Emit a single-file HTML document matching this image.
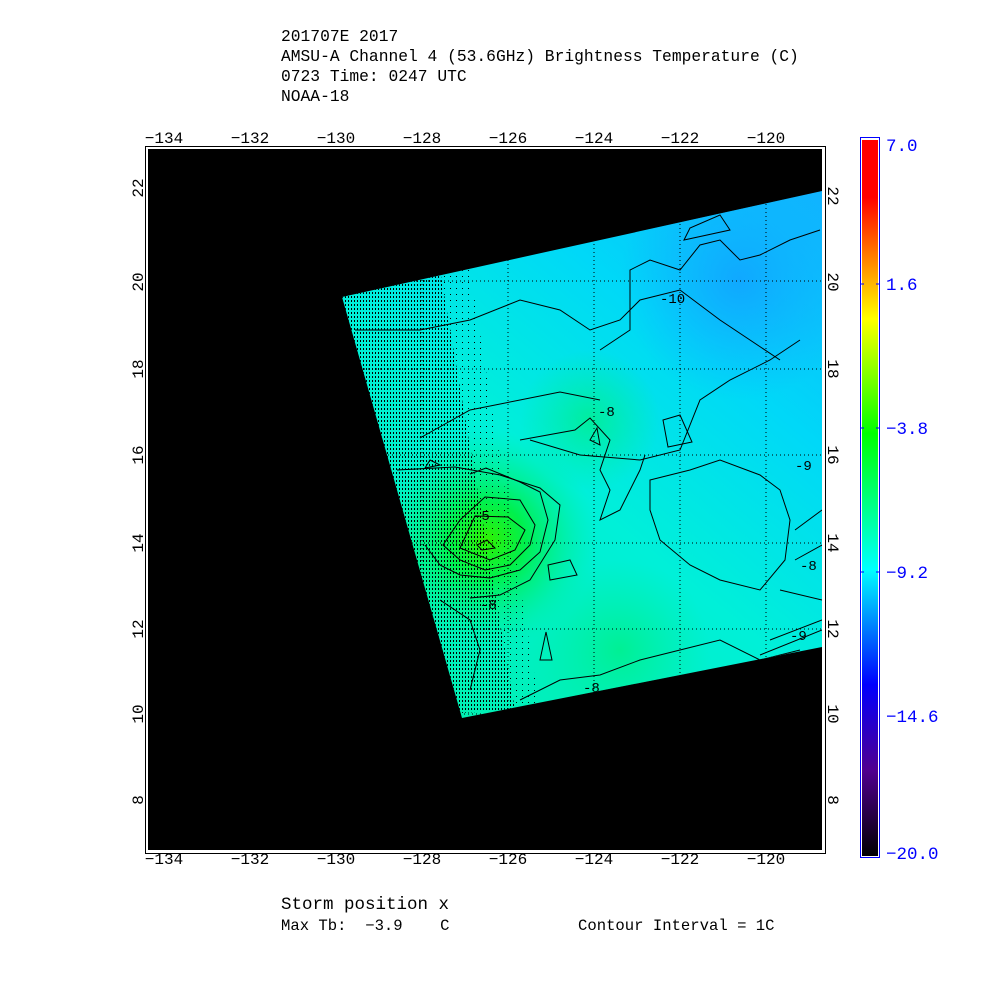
<!DOCTYPE html>
<html><head><style>
body{margin:0;background:#fff;width:1000px;height:1000px;overflow:hidden}
text{font-family:"Liberation Mono","DejaVu Sans Mono",monospace}
</style></head><body>
<svg width="1000" height="1000" viewBox="0 0 1000 1000" xmlns="http://www.w3.org/2000/svg">
<defs>
<linearGradient id="cb" x1="0" y1="0" x2="0" y2="1">
<stop offset="0" stop-color="#ff0000"/><stop offset="0.08" stop-color="#ff0000"/>
<stop offset="0.16" stop-color="#ff7a00"/><stop offset="0.25" stop-color="#ffff00"/>
<stop offset="0.41" stop-color="#00ff00"/><stop offset="0.6" stop-color="#00ffff"/>
<stop offset="0.76" stop-color="#0000ff"/><stop offset="0.88" stop-color="#500090"/>
<stop offset="1" stop-color="#000000"/></linearGradient>
<linearGradient id="base" x1="822" y1="200" x2="420" y2="700" gradientUnits="userSpaceOnUse">
<stop offset="0" stop-color="#10b4ff"/><stop offset="0.3" stop-color="#00d8f8"/>
<stop offset="0.6" stop-color="#00f0d8"/><stop offset="1" stop-color="#00f0b0"/></linearGradient>
<radialGradient id="g1" cx="487" cy="540" r="110" gradientUnits="userSpaceOnUse">
<stop offset="0" stop-color="#30f000"/><stop offset="0.35" stop-color="#00f040" stop-opacity="0.9"/>
<stop offset="1" stop-color="#00f0a0" stop-opacity="0"/></radialGradient>
<radialGradient id="g2" cx="590" cy="420" r="70" gradientUnits="userSpaceOnUse">
<stop offset="0" stop-color="#00f080" stop-opacity="0.7"/><stop offset="1" stop-color="#00f090" stop-opacity="0"/></radialGradient>
<radialGradient id="g3" cx="620" cy="650" r="90" gradientUnits="userSpaceOnUse">
<stop offset="0" stop-color="#00f070" stop-opacity="0.6"/><stop offset="1" stop-color="#00f090" stop-opacity="0"/></radialGradient>
<radialGradient id="g4" cx="740" cy="280" r="120" gradientUnits="userSpaceOnUse">
<stop offset="0" stop-color="#10a8ff"/><stop offset="1" stop-color="#10b0ff" stop-opacity="0"/></radialGradient>
<pattern id="dots" width="3" height="4" patternUnits="userSpaceOnUse"><rect width="1" height="2" fill="#000"/></pattern>
<pattern id="dots2" width="6" height="6" patternUnits="userSpaceOnUse"><rect width="1" height="1" fill="#000"/></pattern>
<clipPath id="sw"><polygon points="342,297 822,191 822,647 462,718"/></clipPath>
</defs>
<g font-size="16.3" fill="#000">
<text x="281" y="41">201707E 2017</text>
<text x="281" y="61">AMSU-A Channel 4 (53.6GHz) Brightness Temperature (C)</text>
<text x="281" y="81">0723 Time: 0247 UTC</text>
<text x="281" y="101">NOAA-18</text>
</g>
<rect x="145.5" y="146.5" width="680" height="707" fill="#fff" stroke="#000"/>
<rect x="148" y="149" width="674" height="701" fill="#000"/>
<g clip-path="url(#sw)">
<rect x="330" y="180" width="500" height="550" fill="url(#base)"/>
<rect x="330" y="180" width="500" height="550" fill="url(#g4)"/>
<rect x="330" y="180" width="500" height="550" fill="url(#g2)"/>
<rect x="330" y="180" width="500" height="550" fill="url(#g3)"/>
<rect x="330" y="180" width="500" height="550" fill="url(#g1)"/>
<polygon points="330,280 440,270 515,710 330,720" fill="url(#dots)"/>
<polygon points="440,270 470,270 540,710 515,710" fill="url(#dots2)"/>
<g stroke="#000" stroke-width="1" stroke-dasharray="1,3">
<line x1="336" y1="281" x2="822" y2="281"/><line x1="336" y1="369" x2="822" y2="369"/>
<line x1="336" y1="455" x2="822" y2="455"/><line x1="336" y1="543" x2="822" y2="543"/>
<line x1="336" y1="629" x2="822" y2="629"/><line x1="336" y1="714" x2="822" y2="714"/>
<line x1="422" y1="180" x2="422" y2="730"/><line x1="508" y1="180" x2="508" y2="730"/>
<line x1="594" y1="180" x2="594" y2="730"/><line x1="680" y1="180" x2="680" y2="730"/>
<line x1="766" y1="180" x2="766" y2="730"/>
</g>
<g fill="none" stroke="#000" stroke-width="1">
<path d="M470,474 L486,468 L520,482 L540,492 L548,520 L540,552 L520,570 L490,578 L460,575 L440,565 L425,545"/>
<path d="M485,497 L520,500 L535,525 L530,545 L510,565 L485,570 L460,560 L443,545 L460,520 Z"/>
<path d="M475,516 L508,517 L525,530 L515,550 L490,560 L460,548 Z"/>
<path d="M477,545 L487,540 L495,548 L482,550 Z"/>
<path d="M397,470 L455,467 L500,475 L540,488 L560,505 L555,540 L530,580 L500,595 L470,598"/>
<path d="M520,440 L575,430 L590,418 L610,440 L600,470 L610,490 L600,520 L620,510 L640,470 L645,455"/>
<path d="M420,438 L470,410 L520,400 L560,392 L600,400"/>
<path d="M530,440 L580,455 L640,460 L680,450 L700,400 L730,380 L770,360 L800,340"/>
<path d="M355,330 L420,330 L470,320 L520,300 L560,310 L590,330 L620,320 L640,300 L680,290 L720,320 L780,360"/>
<path d="M600,350 L630,330 L630,270 L650,260 L680,270 L700,245 L720,240 L740,260 L760,255 L790,240 L820,230"/>
<path d="M684,240 L690,228 L720,215 L730,230 Z"/>
<path d="M650,480 L690,470 L720,460 L760,475 L780,490 L790,520 L785,560 L760,590 L720,580 L690,565 L660,540 L650,510 Z"/>
<path d="M548,565 L570,560 L577,575 L550,580 Z"/>
<path d="M540,660 L546,632 L552,660 Z"/>
<path d="M520,700 L560,680 L600,675 L640,660 L680,650 L720,640 L760,660 L800,650"/>
<path d="M663,420 L680,415 L692,442 L668,447 Z"/>
<path d="M590,440 L597,428 L600,445 Z"/>
<path d="M795,530 L822,510 M795,560 L822,545 M780,590 L822,600 M770,640 L822,620 M760,655 L822,630"/>
<path d="M430,460 L440,465 L425,468 Z"/>
<path d="M440,600 L470,620 L480,650 L470,690"/>
</g>
<g font-size="14" fill="#000">
<text x="598" y="416">-8</text><text x="660" y="303">-10</text><text x="480" y="609">-8</text>
<text x="795" y="470">-9</text><text x="800" y="570">-8</text><text x="790" y="640">-9</text>
<text x="583" y="692">-8</text><text x="473" y="520">-5</text>
</g>
</g>
<g font-size="16" fill="#000" text-anchor="middle">
<text x="164" y="143">−134</text><text x="250" y="143">−132</text><text x="336" y="143">−130</text>
<text x="422" y="143">−128</text><text x="508" y="143">−126</text><text x="594" y="143">−124</text>
<text x="680" y="143">−122</text><text x="766" y="143">−120</text>
<text x="164" y="864">−134</text><text x="250" y="864">−132</text><text x="336" y="864">−130</text>
<text x="422" y="864">−128</text><text x="508" y="864">−126</text><text x="594" y="864">−124</text>
<text x="680" y="864">−122</text><text x="766" y="864">−120</text>
</g>
<g font-size="16" fill="#000" text-anchor="middle">
<text transform="translate(143,188) rotate(-90)">22</text>
<text transform="translate(143,282) rotate(-90)">20</text>
<text transform="translate(143,369) rotate(-90)">18</text>
<text transform="translate(143,455) rotate(-90)">16</text>
<text transform="translate(143,543) rotate(-90)">14</text>
<text transform="translate(143,629) rotate(-90)">12</text>
<text transform="translate(143,714) rotate(-90)">10</text>
<text transform="translate(143,800) rotate(-90)">8</text>
<text transform="translate(828,196) rotate(90)">22</text>
<text transform="translate(828,282) rotate(90)">20</text>
<text transform="translate(828,369) rotate(90)">18</text>
<text transform="translate(828,455) rotate(90)">16</text>
<text transform="translate(828,543) rotate(90)">14</text>
<text transform="translate(828,629) rotate(90)">12</text>
<text transform="translate(828,714) rotate(90)">10</text>
<text transform="translate(828,800) rotate(90)">8</text>
</g>
<rect x="860.5" y="137.5" width="19" height="720" fill="#fff" stroke="#0000ff"/>
<rect x="862" y="140" width="16" height="716" fill="url(#cb)"/>
<g stroke="#0000ff"><line x1="860" y1="284" x2="864" y2="284"/><line x1="876" y1="284" x2="880" y2="284"/>
<line x1="860" y1="428" x2="864" y2="428"/><line x1="876" y1="428" x2="880" y2="428"/>
<line x1="860" y1="572" x2="864" y2="572"/><line x1="876" y1="572" x2="880" y2="572"/></g>
<g font-size="17.5" fill="#0000ff">
<text x="886" y="151">7.0</text><text x="886" y="290">1.6</text><text x="886" y="434">−3.8</text>
<text x="886" y="578">−9.2</text><text x="886" y="722">−14.6</text><text x="886" y="859">−20.0</text>
</g>
<g font-size="17.5" fill="#000">
<text x="281" y="909">Storm position x</text>
<text x="281" y="930" font-size="15.6" xml:space="preserve">Max Tb:  −3.9    C</text>
<text x="578" y="930" font-size="15.6">Contour Interval = 1C</text>
</g>
</svg>
</body></html>
